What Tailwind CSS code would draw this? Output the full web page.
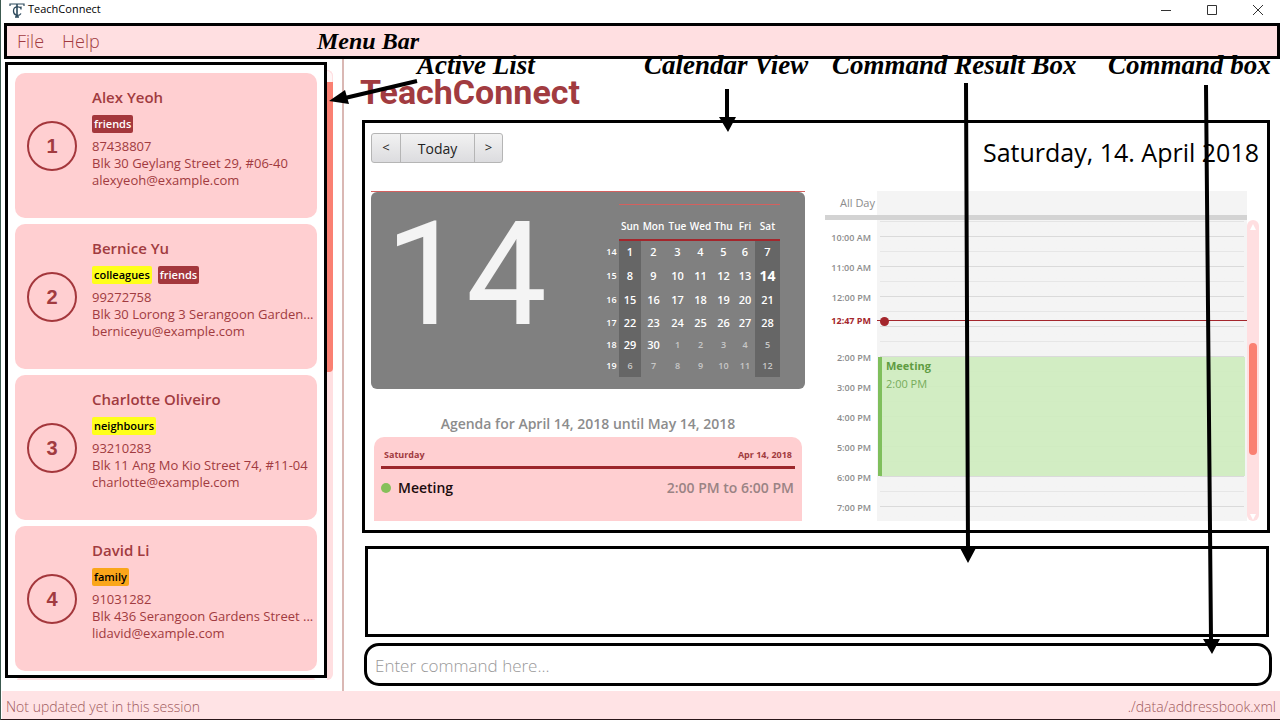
<!DOCTYPE html>
<html lang="en">
<head>
<meta charset="utf-8">
<title>TeachConnect</title>
<script src="https://cdn.jsdelivr.net/npm/@tailwindcss/browser@4"></script>
</head>
<body class="relative flex min-h-screen flex-col overflow-x-hidden border-b-2 border-l border-b-[#2a1518] border-l-[#3c5a50] bg-white font-['Open_Sans','Noto_Sans',sans-serif] text-[#a13b40]">

<header class="flex h-[23px] items-center justify-between pl-2 text-black">
  <div class="flex items-center gap-[3px] pb-1">
    <svg class="h-4 w-4" viewBox="0 0 16 16" fill="none" stroke="#2d4a5c" aria-hidden="true">
      <path d="M1 4V2h14v2" stroke-width="1.2"/><path d="M8 2v13M6 15h4" stroke-width="1.6"/><path d="M12 6.500C10.500 4 4.500 4 4.500 9s5.500 5.500 7.500 2.500M12 4.500v3" stroke-width="1.300"/>
    </svg>
    <span class="text-[11px]">TeachConnect</span>
  </div>
  <div class="flex items-center gap-[34px] pr-4 pb-1">
    <button aria-label="Minimize"><svg class="h-3 w-3" viewBox="0 0 12 12" stroke="#333" fill="none"><path d="M1 6.500h10"/></svg></button>
    <button aria-label="Maximize"><svg class="h-3 w-3" viewBox="0 0 12 12" stroke="#333" fill="none"><path d="M1.500 1.500h9v9h-9z"/></svg></button>
    <button aria-label="Close"><svg class="h-3 w-3" viewBox="0 0 12 12" stroke="#333" fill="none"><path d="M1 1l10 10M11 1L1 11"/></svg></button>
  </div>
</header>

<nav class="ml-[3px] flex h-9 items-center gap-[18px] border-3 border-black bg-[#ffdfe1] pl-[10px] text-[18px] font-light">
  <button>File</button>
  <button>Help</button>
</nav>

<div class="flex flex-1">
  <aside class="flex pt-[3px] pb-[11px] pl-1">
    <div class="w-[322px]">
      <ul class="flex flex-col gap-[6px] border-3 border-black px-[7px] pt-2 pb-1">
        <li class="flex h-[145px] rounded-[10px] bg-[#ffcfd1] pl-3">
          <div class="mt-12 flex h-[50px] w-[50px] shrink-0 items-center justify-center rounded-full border-2 border-[#a4373c] font-['Liberation_Sans',sans-serif] text-[20px] font-bold">1</div>
          <div class="ml-[15px] min-w-0 pt-[13px] text-[13px] leading-[17px]">
            <h2 class="text-[15px] leading-[22px] font-semibold">Alex Yeoh</h2>
            <div class="mt-[7px] mb-[5px] flex gap-[6px] text-[11px] leading-[18px] font-semibold"><span class="rounded-xs bg-[#a4373c] px-[2px] text-white">friends</span></div>
            <p>87438807</p><p class="truncate">Blk 30 Geylang Street 29, #06-40</p><p>alexyeoh@example.com</p>
          </div>
        </li>
        <li class="flex h-[145px] rounded-[10px] bg-[#ffcfd1] pl-3">
          <div class="mt-12 flex h-[50px] w-[50px] shrink-0 items-center justify-center rounded-full border-2 border-[#a4373c] font-['Liberation_Sans',sans-serif] text-[20px] font-bold">2</div>
          <div class="ml-[15px] min-w-0 pt-[13px] text-[13px] leading-[17px]">
            <h2 class="text-[15px] leading-[22px] font-semibold">Bernice Yu</h2>
            <div class="mt-[7px] mb-[5px] flex gap-[6px] text-[11px] leading-[18px] font-semibold"><span class="rounded-xs bg-[#ffff1a] px-[2px] text-black">colleagues</span><span class="rounded-xs bg-[#a4373c] px-[2px] text-white">friends</span></div>
            <p>99272758</p><p class="truncate">Blk 30 Lorong 3 Serangoon Garden...</p><p>berniceyu@example.com</p>
          </div>
        </li>
        <li class="flex h-[145px] rounded-[10px] bg-[#ffcfd1] pl-3">
          <div class="mt-12 flex h-[50px] w-[50px] shrink-0 items-center justify-center rounded-full border-2 border-[#a4373c] font-['Liberation_Sans',sans-serif] text-[20px] font-bold">3</div>
          <div class="ml-[15px] min-w-0 pt-[13px] text-[13px] leading-[17px]">
            <h2 class="text-[15px] leading-[22px] font-semibold">Charlotte Oliveiro</h2>
            <div class="mt-[7px] mb-[5px] flex gap-[6px] text-[11px] leading-[18px] font-semibold"><span class="rounded-xs bg-[#ffff1a] px-[2px] text-black">neighbours</span></div>
            <p>93210283</p><p class="truncate">Blk 11 Ang Mo Kio Street 74, #11-04</p><p>charlotte@example.com</p>
          </div>
        </li>
        <li class="flex h-[145px] rounded-[10px] bg-[#ffcfd1] pl-3">
          <div class="mt-12 flex h-[50px] w-[50px] shrink-0 items-center justify-center rounded-full border-2 border-[#a4373c] font-['Liberation_Sans',sans-serif] text-[20px] font-bold">4</div>
          <div class="ml-[15px] min-w-0 pt-[13px] text-[13px] leading-[17px]">
            <h2 class="text-[15px] leading-[22px] font-semibold">David Li</h2>
            <div class="mt-[7px] mb-[5px] flex gap-[6px] text-[11px] leading-[18px] font-semibold"><span class="rounded-xs bg-[#faa61a] px-[2px] text-black">family</span></div>
            <p>91031282</p><p class="truncate">Blk 436 Serangoon Gardens Street ...</p><p>lidavid@example.com</p>
          </div>
        </li>
      </ul>
      <div class="mx-3 h-[2px] rounded-t-full bg-[#ffdfe1]"></div>
    </div>
    <div class="mt-2 flex w-[6px] flex-col rounded-r-md bg-[#ffdfe1]">
      <div class="h-3 rounded-tr-md border-t border-r border-[#ffdfe1] bg-[#fff6f6]"></div>
      <div class="h-[290px] rounded-br-sm bg-[#fa8072]"></div>
    </div>
  </aside>

  <main class="ml-[9px] flex min-w-0 flex-1 flex-col border-l-2 border-[#dab8b4] pr-2 pb-1 pl-[17px]">
    <h1 class="-ml-px pt-[11px] font-['Roboto',sans-serif] text-[34px] leading-[44px] font-bold">TeachConnect</h1>

    <section class="mt-[6px] mr-[2px] ml-[1px] flex flex-col border-3 border-black pt-[10px] pr-2 pb-[9px] pl-[6px]">
      <div class="flex h-[58px] items-start justify-between">
        <div class="flex h-[30px] divide-x divide-[#b5b5b5] rounded-[3px] border border-[#b5b5b5] bg-linear-to-b from-[#f2f2f2] to-[#dcdcdf] text-[13px] text-[#222]">
          <button class="w-[29px]">&lt;</button>
          <button class="w-[74px] text-[14px]">Today</button>
          <button class="w-[27px]">&gt;</button>
        </div>
        <h2 class="text-[25px] leading-[38px] text-black">Saturday, 14. April 2018</h2>
      </div>

      <div class="flex">
        <div class="flex w-[434px] flex-col">
          <div class="h-px bg-[#d4605e]"></div>
          <div class="flex h-[197px] justify-between rounded-md bg-[#808080] pr-[25px] pl-[14px] text-white">
            <div class="pt-[8px] font-['Roboto',sans-serif] text-[144px] leading-[150px] text-[#f4f4f4]">14</div>
            <table class="mt-3 h-[172px] w-[176px] table-fixed border-collapse text-center text-[11px] leading-[14px] font-semibold [&_td]:p-0 [&_th]:p-0">
              <colgroup><col class="w-[15px]"><col class="w-[22px]"><col class="w-[25px]"><col class="w-[23px]"><col class="w-[23px]"><col class="w-[23px]"><col class="w-[20px]"><col class="w-[25px]"></colgroup>
              <thead><tr class="h-[35px] text-[10px] [&_th]:border-t [&_th]:border-b-2 [&_th]:border-t-[#d4605e] [&_th]:border-b-[#a4262c] [&_th]:pt-2 [&_th]:font-semibold">
                <td></td><th>Sun</th><th>Mon</th><th>Tue</th><th>Wed</th><th>Thu</th><th>Fri</th><th>Sat</th></tr></thead>
              <tbody class="[&_td:first-child]:text-[9px] [&_td:last-child]:bg-[#666] [&_td:nth-child(2)]:bg-[#666]">
                <tr class="h-[24px]"><td>14</td><td>1</td><td>2</td><td>3</td><td>4</td><td>5</td><td>6</td><td>7</td></tr>
                <tr class="h-[25px]"><td>15</td><td>8</td><td>9</td><td>10</td><td>11</td><td>12</td><td>13</td><td class="text-[14px] font-bold">14</td></tr>
                <tr class="h-[23px]"><td>16</td><td>15</td><td>16</td><td>17</td><td>18</td><td>19</td><td>20</td><td>21</td></tr>
                <tr class="h-[22px]"><td>17</td><td>22</td><td>23</td><td>24</td><td>25</td><td>26</td><td>27</td><td>28</td></tr>
                <tr class="h-[22px]"><td>18</td><td>29</td><td>30</td><td class="text-[9px] text-[#c8c8c8]">1</td><td class="text-[9px] text-[#c8c8c8]">2</td><td class="text-[9px] text-[#c8c8c8]">3</td><td class="text-[9px] text-[#c8c8c8]">4</td><td class="text-[9px] text-[#c8c8c8]">5</td></tr>
                <tr class="h-[21px] text-[9px] text-[#c8c8c8]"><td class="text-white">19</td><td>6</td><td>7</td><td>8</td><td>9</td><td>10</td><td>11</td><td>12</td></tr>
              </tbody>
            </table>
          </div>
          <h3 class="mt-[23px] mb-px text-center text-[14px] leading-6 font-semibold text-[#8c8c8c]">Agenda for April 14, 2018 until May 14, 2018</h3>
          <div class="mx-[3px] flex-1 rounded-t-[10px] bg-[#ffcfd1] px-[7px] pt-[10px]">
            <div class="flex justify-between border-b-3 border-[#9c262b] px-[3px] pb-1 text-[9px] leading-[15px] font-bold"><span>Saturday</span><span>Apr 14, 2018</span></div>
            <div class="flex items-center pt-[7px] text-[14px] leading-6 font-semibold">
              <span class="h-[10px] w-[10px] rounded-full bg-[#86c05a]"></span>
              <span class="ml-[7px] flex-1 text-[#1c0c0e]">Meeting</span>
              <span class="pr-px text-[#9a8384]">2:00 PM to 6:00 PM</span>
            </div>
          </div>
        </div>

        <div class="ml-5 min-w-0 flex-1">
          <div class="mr-3 flex h-[29px] border-b-5 border-[#d3d3d3] text-[11px] font-medium text-[#8c8c8c]">
            <div class="w-[52px] pr-[2px] text-right leading-6">All Day</div>
            <div class="flex-1 bg-[#f4f4f4]"></div>
          </div>
          <div class="flex h-[301px]">
            <div class="relative min-w-0 flex-1 overflow-hidden bg-linear-to-r from-white from-[52px] to-[#f4f4f4] to-[52px] text-[9px] font-semibold text-[#8c8c8c]">
              <div class="mr-[3px] ml-[55px] h-[2px] border-b border-[#e4e4e4]"></div>
              <ul class="[&_i]:mr-[3px] [&_i]:ml-[9px] [&_i]:grid [&_i]:flex-1 [&_i]:grid-rows-2 [&_i]:border-b [&_i]:border-[#e6e6e6] [&_i]:before:border-b [&_i]:before:border-[#dadada] [&_li]:flex [&_li]:h-[30px] [&_span]:w-[46px] [&_span]:text-right [&_span]:leading-[31px]">
                <li><span>10:00 AM</span><i></i></li>
                <li><span>11:00 AM</span><i></i></li>
                <li><span>12:00 PM</span><i></i></li>
                <li><span></span><i></i></li>
                <li><span>2:00 PM</span><i></i></li>
                <li><span>3:00 PM</span><i></i></li>
                <li><span>4:00 PM</span><i></i></li>
                <li><span>5:00 PM</span><i></i></li>
                <li><span>6:00 PM</span><i></i></li>
                <li><span>7:00 PM</span><i></i></li>
              </ul>
              <div class="absolute inset-x-0 top-[95px] flex h-3 items-center">
                <span class="w-[46px] text-right font-bold text-[#a4262c]">12:47 PM</span>
                <span class="ml-[9px] h-[9px] w-[9px] rounded-full bg-[#a4262c]"></span>
              </div>
              <div class="absolute top-[100px] right-0 left-[52px] h-px bg-[#a4262c]"></div>
              <div class="absolute top-[137px] right-[2px] left-[53px] h-[119px] border-l-4 border-[#7fbf5c] bg-[#d0ecc0]/95 pl-1 text-[11px] leading-[18px] text-[#5f9c42]">
                <p class="font-bold">Meeting</p><p class="font-normal opacity-80">2:00 PM</p>
              </div>
            </div>
            <div class="flex w-3 flex-col items-center rounded-full bg-[#ffdfe1]">
              <svg class="mt-1 h-2 w-2" viewBox="0 0 8 8" fill="#fff" aria-hidden="true"><path d="M4 0l3 6H1z"/></svg>
              <div class="mt-[111px] h-[112px] w-2 rounded-full bg-[#fa8072]"></div>
              <svg class="mt-auto h-2 w-2" viewBox="0 0 8 8" fill="#fff" aria-hidden="true"><path d="M4 7l3-6H1z"/></svg>
            </div>
          </div>
        </div>
      </div>
    </section>

    <textarea readonly aria-label="Command result" class="mt-[13px] mr-[3px] ml-1 h-[91px] resize-none border-3 border-black outline-none"></textarea>
    <input type="text" aria-label="Command" placeholder="Enter command here..." class="mt-[6px] ml-[3px] h-[43px] rounded-[15px] border-3 border-black px-2 pt-[2px] text-[17px] font-light text-[#333] outline-none placeholder:text-[#999]">
  </main>
</div>

<footer class="ml-px flex h-[28px] items-center justify-between bg-[#ffe3e5] pt-[2px] pr-1 pl-1 text-[14px] font-light text-[#a05a5c]">
  <span>Not updated yet in this session</span>
  <span>./data/addressbook.xml</span>
</footer>

<!-- Callout labels and arrows over the window -->
<div class="pointer-events-none absolute inset-0 font-['Liberation_Serif',serif] text-[27px] leading-[30px] font-bold whitespace-nowrap text-black italic">
  <svg class="absolute inset-0 h-full w-full" stroke="#000" stroke-width="4" aria-hidden="true">
    <path d="M416 81L344 98M726 89V118M965 83L967 548M1205 85L1210 640"/>
    <path stroke="none" d="M328 101l16-11 4 14zM718 117h17l-8 15zM959 548h16l-8 15zM1202 639h17l-8 15z"/>
  </svg>
  <span class="absolute top-[26px] left-[316px] text-[24px]">Menu Bar</span>
  <span class="absolute top-[50px] left-[416px]">Active List</span>
  <span class="absolute top-[50px] left-[643px]">Calendar View</span>
  <span class="absolute top-[50px] left-[831px]">Command Result Box</span>
  <span class="absolute top-[50px] left-[1107px]">Command box</span>
</div>
</body>
</html>
